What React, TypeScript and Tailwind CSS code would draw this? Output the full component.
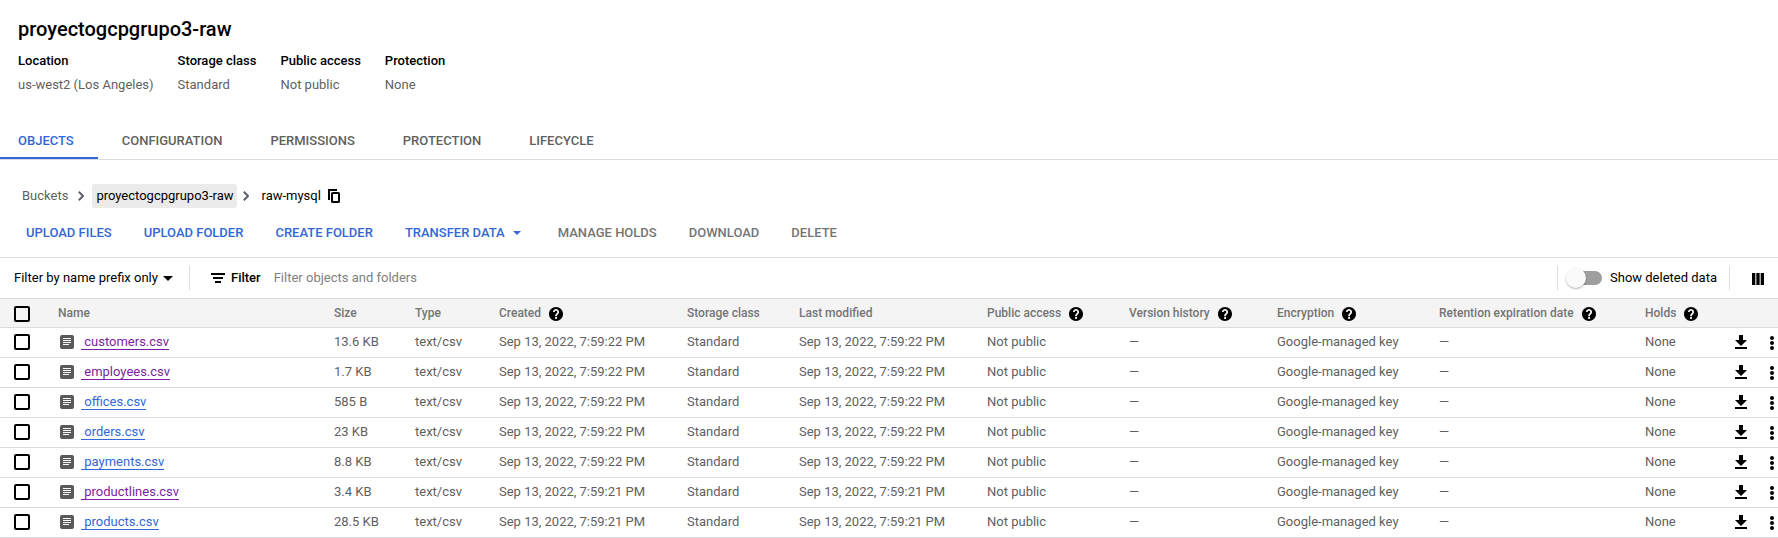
import { useState } from "react";

type ObjectRow = {
  name: string;
  size: string;
  time: string;
  visited: boolean;
};

const rows: ObjectRow[] = [
  { name: "customers.csv", size: "13.6 KB", time: "Sep 13, 2022, 7:59:22 PM", visited: true },
  { name: "employees.csv", size: "1.7 KB", time: "Sep 13, 2022, 7:59:22 PM", visited: true },
  { name: "offices.csv", size: "585 B", time: "Sep 13, 2022, 7:59:22 PM", visited: false },
  { name: "orders.csv", size: "23 KB", time: "Sep 13, 2022, 7:59:22 PM", visited: false },
  { name: "payments.csv", size: "8.8 KB", time: "Sep 13, 2022, 7:59:22 PM", visited: false },
  { name: "productlines.csv", size: "3.4 KB", time: "Sep 13, 2022, 7:59:21 PM", visited: true },
  { name: "products.csv", size: "28.5 KB", time: "Sep 13, 2022, 7:59:21 PM", visited: false },
];

const facts = [
  { label: "Location", value: "us-west2 (Los Angeles)" },
  { label: "Storage class", value: "Standard" },
  { label: "Public access", value: "Not public" },
  { label: "Protection", value: "None" },
];

const tabs = ["OBJECTS", "CONFIGURATION", "PERMISSIONS", "PROTECTION", "LIFECYCLE"];

const columns = [
  { label: "Name", help: false, width: "w-[276px]" },
  { label: "Size", help: false, width: "w-[81px]" },
  { label: "Type", help: false, width: "w-[84px]" },
  { label: "Created", help: true, width: "w-[188px]" },
  { label: "Storage class", help: false, width: "w-[112px]" },
  { label: "Last modified", help: false, width: "w-[188px]" },
  { label: "Public access", help: true, width: "w-[142px]" },
  { label: "Version history", help: true, width: "w-[148px]" },
  { label: "Encryption", help: true, width: "w-[162px]" },
  { label: "Retention expiration date", help: true, width: "w-[206px]" },
  { label: "Holds", help: true, width: "w-[90px]" },
];

function HelpIcon() {
  return (
    <svg viewBox="2 2 20 20" className="size-3.5 fill-black" aria-hidden="true">
      <path d="M12 2C6.48 2 2 6.48 2 12s4.48 10 10 10 10-4.48 10-10S17.52 2 12 2zm1.4 17h-2.6v-2.6h2.6V19zm2.3-7.6-.9.95c-.75.75-1.4 1.35-1.4 2.85h-2.6v-.6c0-1.1.45-2.1 1.2-2.85l1.25-1.25c.35-.35.55-.85.55-1.4 0-1.1-.8-1.8-1.8-1.8s-1.9.8-1.9 1.9H7.6C7.6 6.75 9.6 4.8 12 4.8s4.4 1.95 4.4 4.3c0 .9-.3 1.7-.7 2.3z" />
    </svg>
  );
}

function ChevronIcon() {
  return (
    <svg viewBox="0 0 6 10" className="h-2.5 w-1.5 fill-none stroke-[#5f6368]" aria-hidden="true">
      <path d="M.8.8 5 5 .8 9.2" strokeWidth="2" />
    </svg>
  );
}

function CopyIcon() {
  return (
    <svg viewBox="0 0 12 14" className="h-3.5 w-3 fill-none stroke-black" aria-hidden="true">
      <path d="M1 11V1h8" strokeWidth="2" />
      <rect x="4" y="4" width="7" height="9" rx=".6" strokeWidth="2" />
    </svg>
  );
}

function FileIcon() {
  return (
    <svg viewBox="0 0 14 14" className="size-3.5 shrink-0" aria-hidden="true">
      <rect width="14" height="14" rx="2" className="fill-[#5a5a5a]" />
      <path d="M3 3.5h8M3 5.5h8M3 7.5h8M3 9.5h6" className="stroke-white" strokeWidth="1" />
    </svg>
  );
}

function DownloadIcon() {
  return (
    <svg viewBox="0 0 12 14" className="h-3.5 w-3 fill-black" aria-hidden="true">
      <path d="M4 0h4v5h4l-6 6-6-6h4zM0 12h12v2H0z" />
    </svg>
  );
}

function MoreIcon() {
  return (
    <svg viewBox="0 0 4 14" className="h-3.5 w-1 fill-black" aria-hidden="true">
      <circle cx="2" cy="2" r="2" />
      <circle cx="2" cy="7" r="2" />
      <circle cx="2" cy="12" r="2" />
    </svg>
  );
}

const checkboxClass =
  "block size-4 appearance-none rounded-[2px] border-2 border-black checked:bg-[#3367d6]";

const cellClass = "border-b border-[#dadce0] p-0 pb-px";

function ObjectTable() {
  return (
    <table className="w-full min-w-[1400px] table-fixed border-separate border-spacing-0 text-left">
      <colgroup>
        <col className="w-[58px]" />
        {columns.map((c) => (
          <col key={c.label} className={c.width} />
        ))}
        <col className="w-[43px]" />
      </colgroup>
      <thead className="bg-[#f4f4f4]">
        <tr>
          <th className="h-[30px] border-y border-[#dadce0] p-0 pt-0.5 pl-3.5">
            <input type="checkbox" aria-label="Select all objects" className={checkboxClass} />
          </th>
          {columns.map((c) => (
            <th
              key={c.label}
              className="h-[30px] border-y border-[#dadce0] p-0 text-xs leading-5 font-medium whitespace-nowrap text-[#757575]"
            >
              <span className="flex items-center gap-2">
                {c.label}
                {c.help && (
                  <button type="button" aria-label={`About ${c.label}`} className="pt-0.5">
                    <HelpIcon />
                  </button>
                )}
              </span>
            </th>
          ))}
          <td className="border-y border-[#dadce0]" />
        </tr>
      </thead>
      <tbody>
        {rows.map((r) => (
          <tr key={r.name} className="h-[30px] whitespace-nowrap">
            <td className="border-b border-[#dadce0] p-0 pb-px pl-3.5">
              <input type="checkbox" aria-label={`Select ${r.name}`} className={checkboxClass} />
            </td>
            <td className={cellClass}>
              <span className="flex h-5 items-center gap-[7px] pl-0.5">
                <FileIcon />
                <a
                  href="#"
                  className={
                    r.visited
                      ? "border-b border-current leading-[15px] text-[#7b1fa2]"
                      : "border-b border-current leading-[15px] text-[#3367d6]"
                  }
                >
                  &nbsp;{r.name}
                </a>
              </span>
            </td>
            <td className={cellClass}>{r.size}</td>
            <td className={cellClass}>text/csv</td>
            <td className={cellClass}>{r.time}</td>
            <td className={cellClass}>Standard</td>
            <td className={cellClass}>{r.time}</td>
            <td className={cellClass}>Not public</td>
            <td className={cellClass}>—</td>
            <td className={cellClass}>Google-managed key</td>
            <td className={cellClass}>—</td>
            <td className={cellClass}>None</td>
            <td className={cellClass}>
              <span className="flex h-5 items-center justify-between pr-1">
                <button type="button" aria-label={`Download ${r.name}`}>
                  <DownloadIcon />
                </button>
                <button type="button" aria-label={`More actions for ${r.name}`} className="pt-0.5">
                  <MoreIcon />
                </button>
              </span>
            </td>
          </tr>
        ))}
      </tbody>
    </table>
  );
}

export default function App() {
  const [tab, setTab] = useState("OBJECTS");

  return (
    <main className="overflow-x-auto bg-white font-[Roboto,sans-serif] text-[13px] leading-5 text-[#5f5f5f]">
      <header className="px-[18px] pt-[15px]">
        <h1 className="text-xl leading-7 font-medium text-black">proyectogcpgrupo3-raw</h1>
        <dl className="flex gap-6 pt-2">
          {facts.map((f) => (
            <div key={f.label} className="flex flex-col gap-1">
              <dt className="font-medium text-black">{f.label}</dt>
              <dd>{f.value}</dd>
            </div>
          ))}
        </dl>
      </header>

      <nav className="mt-6 flex h-[41px] border-b border-[#dadce0]" aria-label="Bucket sections">
        {tabs.map((t) => (
          <button
            key={t}
            type="button"
            onClick={() => setTab(t)}
            className={
              t === tab
                ? "border-b-2 border-[#3367d6] px-6 pt-1.5 font-medium text-[#3367d6] first:pl-[18px]"
                : "border-b-2 border-transparent px-6 pt-1.5 font-medium first:pl-[18px]"
            }
          >
            {t}
          </button>
        ))}
      </nav>

      <nav className="mt-6 flex h-6 items-center pl-[22px]" aria-label="Breadcrumb">
        <a href="#" className="mr-2.5">Buckets</a>
        <ChevronIcon />
        <a href="#" className="mr-1.5 ml-2 rounded-[3px] bg-[#ebebeb] px-1 py-0.5 text-black">
          proyectogcpgrupo3-raw
        </a>
        <ChevronIcon />
        <span className="mr-[7px] ml-3 text-black">raw-mysql</span>
        <button type="button" aria-label="Copy path">
          <CopyIcon />
        </button>
      </nav>

      <div className="flex h-[50px] items-center gap-8 border-b border-[#dadce0] pl-[26px] font-medium text-[#3367d6]">
        <button type="button">UPLOAD FILES</button>
        <button type="button">UPLOAD FOLDER</button>
        <button type="button">CREATE FOLDER</button>
        <button type="button" className="flex items-center gap-2 pr-[5px]">
          TRANSFER DATA
          <svg viewBox="0 0 8 4" className="h-1 w-2 fill-current" aria-hidden="true">
            <path d="M0 0h8L4 4z" />
          </svg>
        </button>
        <button type="button" className="text-[#757575]">MANAGE HOLDS</button>
        <button type="button" className="text-[#757575]">DOWNLOAD</button>
        <button type="button" className="text-[#757575]">DELETE</button>
      </div>

      <div className="flex h-10 items-center pl-3.5 text-black">
        <label className="flex items-center gap-[5px]">
          <select aria-label="Filter mode" className="appearance-none bg-transparent">
            <option>Filter by name prefix only</option>
          </select>
          <svg viewBox="0 0 10 5" className="h-[5px] w-2.5 fill-current" aria-hidden="true">
            <path d="M0 0h10L5 5z" />
          </svg>
        </label>
        <div className="ml-4 h-6 w-px bg-[#dadce0]" />
        <label htmlFor="filter" className="ml-[21px] flex items-center gap-1.5 font-medium">
          <svg viewBox="0 0 14 10" className="h-2.5 w-3.5 fill-current" aria-hidden="true">
            <path d="M0 0h14v2H0zM2 4h10v2H2zM4 8h6v2H4z" />
          </svg>
          Filter
        </label>
        <input
          id="filter"
          type="text"
          placeholder="Filter objects and folders"
          className="mx-[13px] min-w-0 flex-1 outline-none placeholder:text-[#808080]"
        />
        <div className="h-6 w-px bg-[#dadce0]" />
        <label className="ml-2 flex items-center gap-2">
          <span className="relative flex h-5 w-9 items-center">
            <input
              type="checkbox"
              role="switch"
              className="peer ml-1 h-3.5 w-8 appearance-none rounded-full bg-[#9e9e9e]"
            />
            <span className="absolute left-0 size-5 rounded-full bg-[#fafafa] shadow-[0_1px_2px_rgba(0,0,0,0.3)] peer-checked:left-4" />
          </span>
          Show deleted data
        </label>
        <div className="ml-3 h-6 w-px bg-[#dadce0]" />
        <button type="button" aria-label="Column display options" className="mr-3.5 ml-[22px] pt-0.5">
          <svg viewBox="0 0 12 12" className="size-3 fill-current" aria-hidden="true">
            <path d="M0 0h3.3v12H0zM4.35 0h3.3v12h-3.3zM8.7 0H12v12H8.7z" />
          </svg>
        </button>
      </div>

      <ObjectTable />
    </main>
  );
}
